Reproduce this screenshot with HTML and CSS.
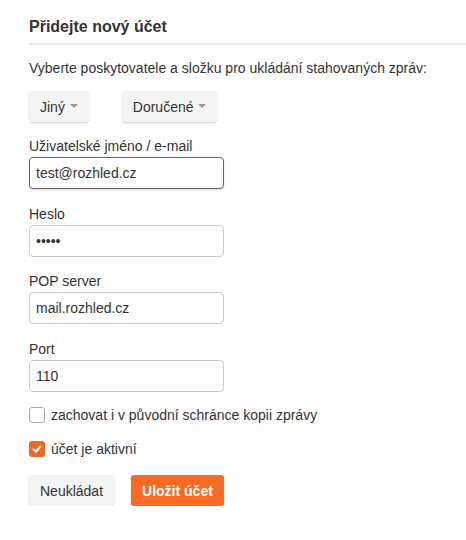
FILE: index.html
```html
<!DOCTYPE html>
<html lang="cs">
<head>
  <meta charset="UTF-8">
  <meta name="viewport" content="width=device-width, initial-scale=1.0">
  <title>Přidejte nový účet</title>
  <link rel="stylesheet" href="styles.css">
</head>
<body>
  <div class="container">
    <h2 class="title">Přidejte nový účet</h2>
    <p class="intro">Vyberte poskytovatele a složku pro ukládání stahovaných zpráv:</p>

    <div class="pickers">
      <button class="dropdown">Jiný <span class="caret"></span></button>
      <button class="dropdown">Doručené <span class="caret"></span></button>
    </div>

    <div class="form-group">
      <label for="user">Uživatelské jméno / e-mail</label>
      <input type="text" id="user" class="focused" value="test@rozhled.cz">
    </div>
    <div class="form-group">
      <label for="pass">Heslo</label>
      <input type="password" id="pass" value="12345">
    </div>
    <div class="form-group">
      <label for="server">POP server</label>
      <input type="text" id="server" value="mail.rozhled.cz">
    </div>
    <div class="form-group">
      <label for="port">Port</label>
      <input type="text" id="port" value="110">
    </div>

    <label class="check">
      <span class="box"></span>
      zachovat i v původní schránce kopii zprávy
    </label>
    <label class="check">
      <span class="box checked">
        <svg width="12" height="12" viewBox="0 0 12 12"><path d="M2.5 6.3 L5 8.8 L9.6 3.2" fill="none" stroke="#fff" stroke-width="2" stroke-linecap="round" stroke-linejoin="round"/></svg>
      </span>
      účet je aktivní
    </label>

    <div class="actions">
      <button class="btn">Neukládat</button>
      <button class="btn btn-primary">Uložit účet</button>
    </div>
  </div>
</body>
</html>
```

FILE: styles.css
```css
body {
  font-family: 'Liberation Sans', Arial, sans-serif;
  font-size: 14px;
  color: #333;
  margin: 0;
  padding: 0 0 0 29px;
  background: #fff;
}

.container {
  padding-top: 15px;
}

.title {
  font-size: 16px;
  font-weight: bold;
  margin: 0;
  padding-bottom: 4px;
  line-height: 24px;
  border-bottom: 2px solid #e8e8e8;
}

.intro {
  font-size: 14px;
  margin: 13px 0 13px;
  line-height: 20px;
}

.pickers {
  display: flex;
  gap: 33px;
  margin-bottom: 15px;
}

.dropdown, .btn {
  font-family: inherit;
  font-size: 14px;
  color: #333;
  background: #f4f4f4;
  border: none;
  border-radius: 3px;
  box-shadow: 0 1px 2px rgba(0, 0, 0, 0.2);
  height: 31px;
  padding: 0 11px;
  cursor: pointer;
}

.caret {
  display: inline-block;
  width: 0;
  height: 0;
  margin-left: 1px;
  vertical-align: middle;
  border-top: 4px solid #999;
  border-left: 4px solid transparent;
  border-right: 4px solid transparent;
  position: relative;
  top: -2px;
}

.form-group {
  margin-bottom: 15.5px;
}

.form-group label {
  display: block;
  font-size: 14px;
  line-height: 18px;
  margin-bottom: 2px;
}

.form-group input {
  box-sizing: border-box;
  width: 195px;
  height: 32px;
  padding: 0 6px;
  font-family: inherit;
  font-size: 14px;
  color: #333;
  border: 1px solid #ccc;
  border-radius: 4px;
  outline: none;
}

.form-group input.focused {
  border-color: #666;
  box-shadow: 0 1px 2px rgba(0, 0, 0, 0.15);
}

.check {
  display: flex;
  align-items: center;
  gap: 6px;
  font-size: 14px;
  line-height: 16px;
  height: 16px;
  margin-bottom: 18px;
}

.box {
  box-sizing: border-box;
  width: 16px;
  height: 16px;
  border: 1px solid #aaa;
  border-radius: 3px;
  display: flex;
  align-items: center;
  justify-content: center;
}

.box.checked {
  background: #f26522;
  border-color: #f26522;
}

.actions {
  display: flex;
  gap: 17px;
}

.btn-primary {
  background: #f96a23;
  color: #fff;
  font-weight: bold;
}
```
